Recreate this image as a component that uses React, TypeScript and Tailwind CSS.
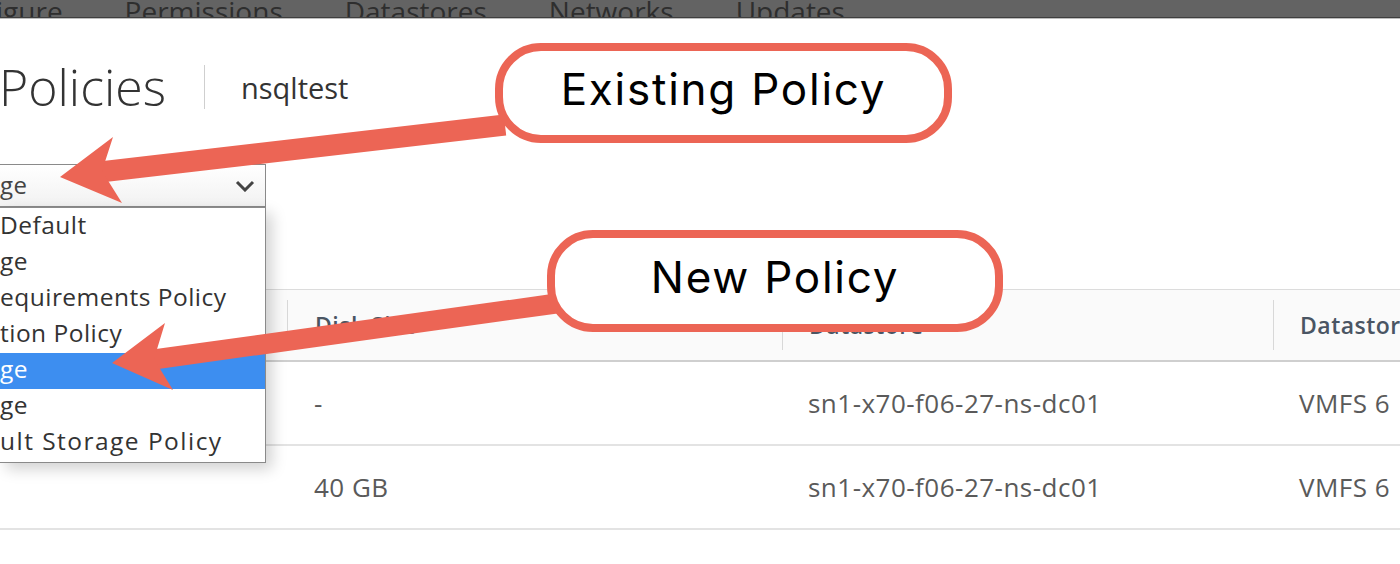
const RED = "#ec6555";

const TABS = ["igure", "Permissions", "Datastores", "Networks", "Updates"];

const OPTIONS = [
  "Default",
  "ge",
  "equirements Policy",
  "tion Policy",
  "ge",
  "ge",
  "ult Storage Policy",
];

const ROWS = [
  { size: "-", datastore: "sn1-x70-f06-27-ns-dc01", type: "VMFS 6" },
  { size: "40 GB", datastore: "sn1-x70-f06-27-ns-dc01", type: "VMFS 6" },
];

function Callout({ label, className }: { label: string; className: string }) {
  return (
    <div
      className={`absolute flex items-center justify-center rounded-[46px] border-[8px] border-[#ec6555] bg-white text-[44px] tracking-[0.04em] text-black ${className}`}
      style={{ fontFamily: "Inter, 'Liberation Sans', sans-serif" }}
    >
      {label}
    </div>
  );
}

export default function App() {
  return (
    <div
      className="relative h-[564px] w-[1400px] overflow-hidden bg-white tracking-[0.03em] text-[#333]"
      style={{ fontFamily: "'Open Sans', Lato, sans-serif" }}
    >
      {/* dimmed tab bar */}
      <div className="flex h-[18px] gap-[62px] overflow-hidden border-b border-[#3f3f3f] bg-[#636363] text-[28px] leading-none tracking-normal text-[#2e2e2e] shadow-[0_1px_0_#bdbdbd]">
        {TABS.map((t, i) => (
          <span key={t} className={`-mt-[3px] shrink-0 ${i === 0 ? "-ml-[4px]" : ""}`}>
            {t}
          </span>
        ))}
      </div>

      {/* page title */}
      <div className="mt-[46px] flex h-[46px] items-center">
        <h1 className="-ml-[1px] shrink-0 text-[50px] font-light leading-none tracking-normal text-[#333]">Policies</h1>
        <div className="ml-[38px] h-[44px] w-px shrink-0 bg-[#cfcfcf]" />
        <span className="ml-[36px] text-[29px] leading-none tracking-normal text-[#333]">nsqltest</span>
      </div>

      {/* select */}
      <div className="mt-[54px] flex h-[43px] w-[266px] items-center justify-between border border-l-0 border-[#8a8a8a] bg-gradient-to-b from-white to-[#f2f2f2] pr-[9px]">
        <span className="-mt-[2px] text-[24px] leading-none text-[#444]">ge</span>
        <svg width="20" height="12" viewBox="0 0 20 12" className="mr-[1px]">
          <path d="M2 2 L10 10 L18 2" fill="none" stroke="#444" strokeWidth="3" />
        </svg>
      </div>

      {/* table */}
      <div className="mt-[82px] border-t border-[#dcdcdc]">
        <div className="flex h-[72px] items-center border-b-2 border-[#cfcfcf] bg-[#fafafa] text-[23px] font-semibold text-[#4a5563]">
          <div className="w-[287px] shrink-0" />
          <div className="flex h-[50px] w-[495px] shrink-0 items-center border-l border-[#d8d8d8] pl-[27px]">Disk Size</div>
          <div className="flex h-[50px] w-[491px] shrink-0 items-center border-l border-[#d8d8d8] pl-[26px]">Datastore</div>
          <div className="flex h-[50px] shrink-0 items-center whitespace-nowrap border-l border-[#d8d8d8] pl-[26px]">Datastore Type</div>
        </div>
        {ROWS.map((r, i) => (
          <div
            key={i}
            className="flex h-[84px] items-center border-b-2 border-[#e3e3e3] text-[26px] text-[#5a5a5a]"
          >
            <div className="w-[287px] shrink-0" />
            <div className="w-[495px] shrink-0 pl-[27px]">{r.size}</div>
            <div className="w-[491px] shrink-0 pl-[26px]">{r.datastore}</div>
            <div className="shrink-0 whitespace-nowrap pl-[26px]">{r.type}</div>
          </div>
        ))}
      </div>

      {/* open dropdown list */}
      <div className="absolute left-0 top-[207px] w-[266px] border border-l-0 border-[#8a8a8a] bg-white py-px shadow-[6px_6px_14px_rgba(0,0,0,0.18)]">
        {OPTIONS.map((o, i) => (
          <div
            key={i}
            className={`flex h-[36px] items-center pb-[4px] text-[24.5px] leading-none ${
              i === 4 ? "bg-[#3d8ef0] text-white" : "text-[#333]"
            } ${i === 6 ? "tracking-[0.06em]" : ""}`}
          >
            {o}
          </div>
        ))}
      </div>

      {/* annotation arrows */}
      <svg className="pointer-events-none absolute inset-0" width="1400" height="564">
        <line x1="505" y1="125" x2="100" y2="172" stroke={RED} strokeWidth="21" />
        <polygon points="60,177 113,137 102,171 122,203" fill={RED} />
        <line x1="560" y1="303" x2="150" y2="360" stroke={RED} strokeWidth="20" />
        <polygon points="112,363 165,323 154,359 173,390" fill={RED} />
      </svg>

      <Callout label="Existing Policy" className="left-[495px] top-[43px] h-[100px] w-[457px] pb-[8px]" />
      <Callout label="New Policy" className="left-[547px] top-[230px] h-[102px] w-[456px] pb-[8px]" />
    </div>
  );
}
